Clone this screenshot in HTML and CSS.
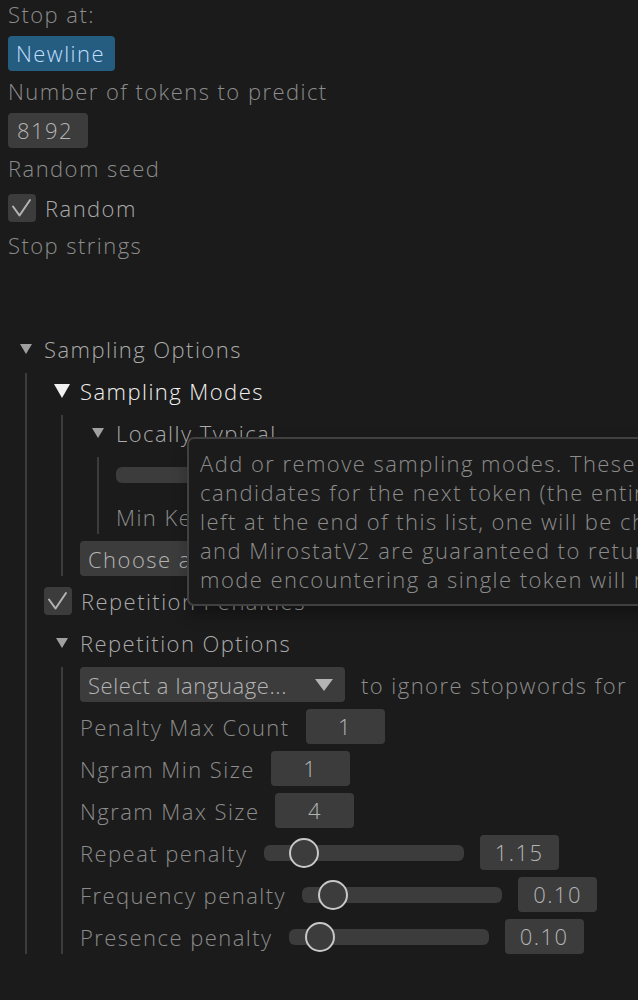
FILE: index.html
```html
<!DOCTYPE html>
<html>
<head>
<meta charset="utf-8">
<link rel="stylesheet" href="styles.css">
</head>
<body>
<div class="panel">
  <div class="top">
    <div class="lbl">Stop at:</div>
    <div class="wrow"><span class="btn selected">Newline</span></div>
    <div class="lbl">Number of tokens to predict</div>
    <div class="wrow"><span class="field">8192</span></div>
    <div class="lbl">Random seed</div>
    <div class="wrow"><span class="check"><svg width="28" height="28" viewBox="0 0 28 28"><polyline points="5,12.5 11.5,21.5 22,6" fill="none" stroke="#b4b4b4" stroke-width="2" stroke-linejoin="round" stroke-linecap="round"/></svg></span><span class="clabel">Random</span></div>
    <div class="lbl">Stop strings</div>
  </div>

  <div class="section">
    <div class="header"><span class="tri"><svg width="12" height="10" viewBox="0 0 12 10"><polygon points="0,0 12,0 6,10" fill="#a0a0a0"/></svg></span><span class="htext">Sampling Options</span></div>
    <div class="cbody">
      <div class="header hovered"><span class="tri"><svg width="16" height="14" viewBox="0 0 16 14"><polygon points="0,0 16,0 8,14" fill="#f0f0f0"/></svg></span><span class="htext">Sampling Modes</span></div>
      <div class="cbody">
        <div class="header"><span class="tri"><svg width="12" height="10" viewBox="0 0 12 10"><polygon points="0,0 12,0 6,10" fill="#a0a0a0"/></svg></span><span class="htext">Locally Typical</span></div>
        <div class="cbody">
          <div class="wrow"><div class="slider"><div class="track"></div><div class="knob" style="left:90px"></div></div><span class="lbl-in">Typical P</span></div>
          <div class="wrow"><span class="lbl-in">Min Keep</span><span class="drag">1</span></div>
        </div>
        <div class="wrow"><span class="combo wide"><span>Choose a sampling mode</span><svg width="18" height="12" viewBox="0 0 18 12"><polygon points="0,0 18,0 9,12" fill="#b4b4b4"/></svg></span></div>
      </div>
      <div class="wrow"><span class="check"><svg width="28" height="28" viewBox="0 0 28 28"><polyline points="5,12.5 11.5,21.5 22,6" fill="none" stroke="#b4b4b4" stroke-width="2" stroke-linejoin="round" stroke-linecap="round"/></svg></span><span class="clabel">Repetition Penalties</span></div>
      <div class="header"><span class="tri"><svg width="12" height="10" viewBox="0 0 12 10"><polygon points="0,0 12,0 6,10" fill="#a0a0a0"/></svg></span><span class="htext">Repetition Options</span></div>
      <div class="cbody">
        <div class="wrow"><span class="combo lang"><span>Select a language...</span><svg width="18" height="12" viewBox="0 0 18 12"><polygon points="0,0 18,0 9,12" fill="#b4b4b4"/></svg></span><span class="lbl-in">to ignore stopwords for</span></div>
        <div class="wrow"><span class="lbl-in">Penalty Max Count</span><span class="drag">1</span></div>
        <div class="wrow"><span class="lbl-in">Ngram Min Size</span><span class="drag">1</span></div>
        <div class="wrow"><span class="lbl-in">Ngram Max Size</span><span class="drag">4</span></div>
        <div class="wrow"><span class="lbl-in">Repeat penalty</span><div class="slider"><div class="track"></div><div class="knob" style="left:25px"></div></div><span class="drag">1.15</span></div>
        <div class="wrow"><span class="lbl-in">Frequency penalty</span><div class="slider"><div class="track"></div><div class="knob" style="left:16px"></div></div><span class="drag">0.10</span></div>
        <div class="wrow"><span class="lbl-in">Presence penalty</span><div class="slider"><div class="track"></div><div class="knob" style="left:16px"></div></div><span class="drag">0.10</span></div>
      </div>
    </div>
  </div>

  <div class="tooltip">
    <div>Add or remove sampling modes. These modes filter the list of</div>
    <div>candidates for the next token (the entire vocabulary). If more than one is</div>
    <div>left at the end of this list, one will be chosen at random. Mirostat</div>
    <div>and MirostatV2 are guaranteed to return a single token, so any</div>
    <div>mode encountering a single token will not filter further.</div>
  </div>
</div>
</body>
</html>
```
FILE: styles.css
```css
html, body {
  margin: 0;
  padding: 0;
  background: #1b1b1b;
  overflow: hidden;
}
body {
  font-family: "Open Sans", "Noto Sans", sans-serif;
  font-weight: 300;
  font-size: 22px;
  letter-spacing: 1.45px;
  color: #8c8c8c;
}
.panel {
  position: relative;
  width: 638px;
  height: 1000px;
  overflow: hidden;
  padding-left: 8px;
  box-sizing: border-box;
}
.top {
  display: flex;
  flex-direction: column;
  gap: 6px;
}
.lbl {
  height: 30px;
  line-height: 29px;
  white-space: nowrap;
}
.wrow {
  height: 35px;
  display: flex;
  align-items: center;
  gap: 16px;
  white-space: nowrap;
}
.btn {
  height: 35px;
  line-height: 35px;
  padding: 0 8px;
  border-radius: 4px;
  box-sizing: border-box;
}
.btn.selected {
  width: 107px;
  background: #255d80;
  color: #c0deff;
}
.field {
  width: 80px;
  height: 35px;
  line-height: 35px;
  padding-left: 9px;
  box-sizing: border-box;
  background: #3c3c3c;
  border-radius: 4px;
  color: #b4b4b4;
}
.check {
  width: 28px;
  height: 28px;
  background: #3c3c3c;
  border-radius: 4px;
  display: flex;
  flex: none;
}
.wrow .check + .clabel {
  margin-left: -7px;
}
.clabel {
  color: #aaaaaa;
}
.section {
  margin-top: 70px;
  display: flex;
  flex-direction: column;
  gap: 7px;
}
.cbody {
  display: flex;
  flex-direction: column;
  gap: 7px;
  margin-left: 17px;
  border-left: 2px solid #3c3c3c;
  padding-left: 17px;
}
.header {
  height: 35px;
  display: flex;
  align-items: center;
  white-space: nowrap;
}
.tri {
  width: 36px;
  display: flex;
  justify-content: center;
  align-items: center;
  flex: none;
}
.htext {
  color: #aaaaaa;
}
.header.hovered .htext {
  color: #f0f0f0;
}
.lbl-in {
  white-space: nowrap;
}
.drag {
  width: 79px;
  height: 35px;
  line-height: 35px;
  text-align: center;
  background: #3c3c3c;
  border-radius: 4px;
  color: #b4b4b4;
  flex: none;
}
.combo {
  height: 35px;
  display: flex;
  align-items: center;
  justify-content: space-between;
  background: #3c3c3c;
  border-radius: 4px;
  color: #b4b4b4;
  padding: 0 12px 0 8px;
  box-sizing: border-box;
  flex: none;
}
.combo.lang {
  width: 265px;
}
.combo.lang span {
  letter-spacing: 0.6px;
}
.combo.wide {
  width: 330px;
}
.slider {
  position: relative;
  width: 200px;
  height: 35px;
  display: flex;
  align-items: center;
  flex: none;
}
.track {
  width: 100%;
  height: 16px;
  border-radius: 6px;
  background: #3c3c3c;
}
.knob {
  position: absolute;
  top: 2.5px;
  width: 30px;
  height: 30px;
  box-sizing: border-box;
  border: 2px solid #c8c8c8;
  border-radius: 50%;
  background: #3c3c3c;
}
.tooltip {
  position: absolute;
  left: 187px;
  top: 437px;
  width: 640px;
  height: 169px;
  box-sizing: border-box;
  padding: 10px 12px 12px 11px;
  background: #1b1b1b;
  border: 2px solid #404040;
  border-radius: 7px;
  line-height: 29px;
  white-space: nowrap;
  color: #8c8c8c;
  box-shadow: 2px 8px 16px rgba(0, 0, 0, 0.35);
  z-index: 10;
}
```
